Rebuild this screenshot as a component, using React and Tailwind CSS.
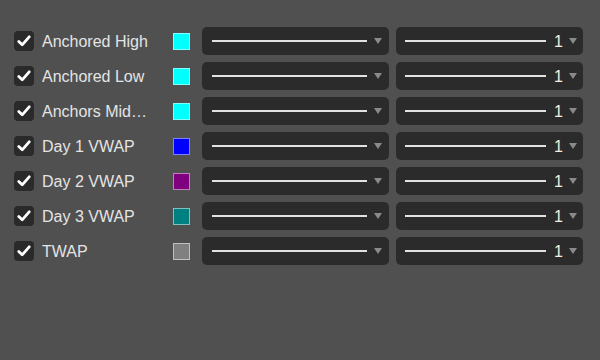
const rows = [
  { label: 'Anchored High', color: '#00ffff' },
  { label: 'Anchored Low', color: '#00ffff' },
  { label: 'Anchors Middle', color: '#00ffff' },
  { label: 'Day 1 VWAP', color: '#0000ff' },
  { label: 'Day 2 VWAP', color: '#800080' },
  { label: 'Day 3 VWAP', color: '#008080' },
  { label: 'TWAP', color: '#808080' },
]

function Arrow() {
  return (
    <svg width="8" height="6" viewBox="0 0 8 6" className="shrink-0">
      <path d="M0 0 L8 0 L4 6 Z" fill="#8a8a8a" />
    </svg>
  )
}

function Check() {
  return (
    <span className="flex h-5 w-5 shrink-0 items-center justify-center rounded-[4px] bg-[#2a2a2a]">
      <svg width="14" height="12" viewBox="0 0 14 12">
        <path
          d="M1.8 6.4 L5.2 9.8 L12.2 1.8"
          fill="none"
          stroke="#ffffff"
          strokeWidth="2.8"
          strokeLinecap="round"
          strokeLinejoin="round"
        />
      </svg>
    </span>
  )
}

export default function App() {
  return (
    <div
      className="h-[360px] w-[600px] bg-[#505050] pl-[14px] pt-[27px]"
      style={{ fontFamily: '"Liberation Sans", Arial, sans-serif' }}
    >
      <div className="flex flex-col gap-[7px]">
        {rows.map((r) => (
          <div key={r.label} className="flex h-[28px] items-center">
            <Check />
            <span className="ml-2 mt-[2px] w-[110px] truncate text-[16px] leading-5 text-[#e4e4e4]">
              {r.label}
            </span>
            <span
              className="ml-[21px] h-[17px] w-[17px] shrink-0 border border-white/50"
              style={{ backgroundColor: r.color }}
            />
            {/* line style */}
            <div className="ml-3 flex h-[28px] w-[187px] items-center rounded-[5px] bg-[#2b2b2b] pl-[10px] pr-[7px]">
              <span className="h-[2px] w-[155px] bg-[#e2e2e2]" />
              <span className="ml-auto">
                <Arrow />
              </span>
            </div>
            {/* line width */}
            <div className="ml-[7px] flex h-[28px] w-[187px] items-center rounded-[5px] bg-[#2b2b2b] pl-[9px] pr-[6px]">
              <span className="h-[2px] w-[141px] bg-[#e2e2e2]" />
              <span className="ml-[8px] mt-[2px] text-[16px] leading-5 text-[#f2efdc]">1</span>
              <span className="ml-auto">
                <Arrow />
              </span>
            </div>
          </div>
        ))}
      </div>
    </div>
  )
}
